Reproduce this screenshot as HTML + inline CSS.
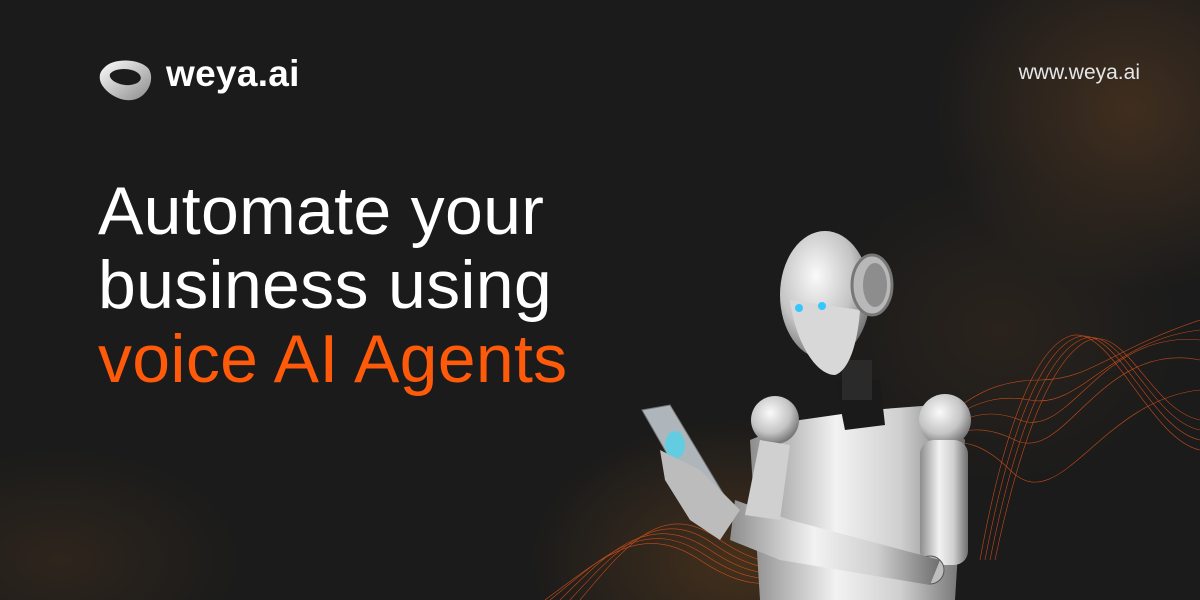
<!DOCTYPE html>
<html><head><meta charset="utf-8"><style>
html,body{margin:0;padding:0}
body{width:1200px;height:600px;overflow:hidden;position:relative;background:#1b1b1b;font-family:"Liberation Sans",sans-serif}
.bg{position:absolute;inset:0;background:
radial-gradient(ellipse 280px 260px at 1130px 110px,rgba(100,65,35,.5),transparent 70%),
radial-gradient(ellipse 300px 200px at 740px 560px,rgba(110,70,30,.5),transparent 70%),
radial-gradient(ellipse 260px 160px at 60px 560px,rgba(90,60,30,.3),transparent 70%),
radial-gradient(ellipse 260px 220px at 1000px 330px,rgba(70,50,30,.35),transparent 70%)}
.logo{position:absolute;left:98px;top:58px}
.brand{position:absolute;left:166px;top:53px;color:#fff;font-weight:bold;font-size:37px;letter-spacing:.3px}
.url{position:absolute;right:60px;top:61px;color:#e6e6e6;font-size:21px}
h1{position:absolute;left:98px;top:174px;margin:0;font-weight:normal;font-size:68px;line-height:74px;color:#fff;letter-spacing:.3px}
h1 span{color:#ff5a0a}
svg.r{position:absolute;left:0;top:0}
</style></head><body>
<div class="bg"></div>
<svg class="logo" width="56" height="44" viewBox="0 0 56 44">
<defs><linearGradient id="lg" x1="0" y1="0" x2="1" y2="1"><stop offset="0" stop-color="#fff"/><stop offset="1" stop-color="#8a8a8a"/></linearGradient></defs>
<path d="M6 10 C14 0 40 0 50 10 C58 20 50 40 34 42 C20 44 4 32 2 22 C1 16 3 13 6 10 Z M12 16 C10 22 22 28 32 27 C42 26 46 20 40 15 C32 9 16 10 12 16 Z" fill="url(#lg)" fill-rule="evenodd"/>
</svg>
<div class="brand">weya.ai</div>
<div class="url">www.weya.ai</div>
<h1>Automate your<br>business using<br><span>voice AI Agents</span></h1>
<svg class="r" width="1200" height="600" viewBox="0 0 1200 600">
<defs>
<linearGradient id="s" x1="0" y1="0" x2="1" y2="0"><stop offset="0" stop-color="#8d8d8d"/><stop offset=".4" stop-color="#f2f2f2"/><stop offset=".7" stop-color="#cfcfcf"/><stop offset="1" stop-color="#6e6e6e"/></linearGradient>
<radialGradient id="h" cx=".4" cy=".35" r=".7"><stop offset="0" stop-color="#fafafa"/><stop offset=".6" stop-color="#c4c4c4"/><stop offset="1" stop-color="#6a6a6a"/></radialGradient>
</defs>
<g fill="none" stroke="#e2531a" stroke-width=".6" opacity=".85">
<path d="M545 600 C600 560 640 520 700 560 C760 600 800 590 860 520 C920 440 960 420 1010 470 C1060 520 1100 400 1200 390"/>
<path d="M550 600 C605 555 645 515 705 555 C765 595 805 585 865 515 C925 435 965 415 1015 440 C1065 465 1100 340 1200 360"/>
<path d="M560 600 C610 550 650 510 710 550 C770 590 810 580 870 510 C930 430 970 400 1020 420 C1070 440 1100 330 1200 340"/>
<path d="M570 600 C620 545 660 505 715 545 C775 585 815 575 875 505 C935 420 975 390 1030 400 C1080 410 1110 340 1200 330"/>
<path d="M580 600 C630 540 665 500 720 540 C780 580 820 570 880 500 C940 410 980 380 1040 380 C1090 380 1110 350 1200 320"/>
<path d="M990 560 C1010 460 1040 360 1080 340 C1120 320 1150 420 1200 430"/>
<path d="M985 560 C1005 455 1035 355 1075 338 C1115 320 1150 430 1200 440"/>
<path d="M980 560 C1000 450 1030 350 1070 336 C1110 322 1150 440 1200 450"/>
<path d="M995 560 C1015 465 1045 365 1085 342 C1125 320 1150 410 1200 420"/>
</g>
<path d="M800 420 L870 410 L935 405 L965 440 L955 600 L760 600 L750 440 Z" fill="url(#s)"/>
<path d="M835 380 L880 380 L885 425 L845 430 Z" fill="#1a1a1a"/>
<circle cx="775" cy="420" r="24" fill="url(#h)"/>
<circle cx="945" cy="420" r="26" fill="url(#h)"/>
<rect x="920" y="440" width="48" height="125" rx="14" fill="url(#s)"/>
<circle cx="930" cy="570" r="14" fill="#bdbdbd" stroke="#555"/>
<path d="M735 500 L790 520 L940 560 L930 585 L780 560 L730 540 Z" fill="url(#s)"/>
<path d="M760 440 L790 445 L780 520 L745 515 Z" fill="#d0d0d0"/>
<path d="M642 410 L670 405 L730 505 L705 520 Z" fill="#aeb6bb" stroke="#777"/>
<ellipse cx="675" cy="445" rx="10" ry="14" fill="#4fd3ea" opacity=".8"/>
<path d="M660 450 L700 470 L740 510 L720 540 L690 520 L665 480 Z" fill="#bcbcbc"/>
<rect x="842" y="360" width="30" height="40" fill="#2a2a2a"/>
<ellipse cx="825" cy="295" rx="45" ry="64" fill="url(#h)"/>
<path d="M790 300 C795 340 815 375 835 375 C850 370 858 340 860 310 Z" fill="#d8d8d8"/>
<ellipse cx="872" cy="285" rx="20" ry="30" fill="#b8b8b8" stroke="#777" stroke-width="3"/>
<ellipse cx="875" cy="285" rx="12" ry="22" fill="#8d8d8d"/>
<circle cx="799" cy="308" r="4" fill="#35c6ff"/>
<circle cx="822" cy="306" r="4" fill="#35c6ff"/>
</svg>
</body></html>
